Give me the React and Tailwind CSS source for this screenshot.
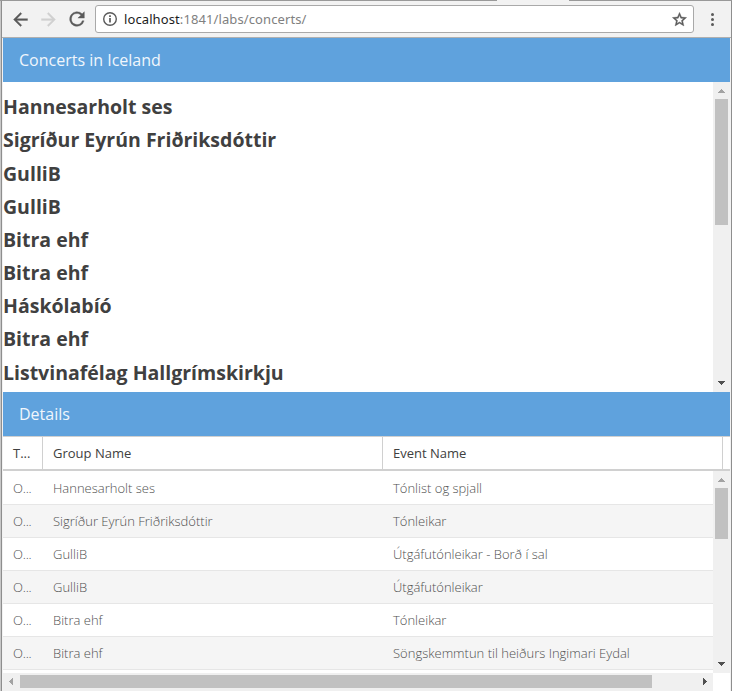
import React from "react";

const concerts = [
  "Hannesarholt ses",
  "Sigríður Eyrún Friðriksdóttir",
  "GulliB",
  "GulliB",
  "Bitra ehf",
  "Bitra ehf",
  "Háskólabíó",
  "Bitra ehf",
  "Listvinafélag Hallgrímskirkju",
];

const rows = [
  ["Hannesarholt ses", "Tónlist og spjall"],
  ["Sigríður Eyrún Friðriksdóttir", "Tónleikar"],
  ["GulliB", "Útgáfutónleikar - Borð í sal"],
  ["GulliB", "Útgáfutónleikar"],
  ["Bitra ehf", "Tónleikar"],
  ["Bitra ehf", "Söngskemmtun til heiðurs Ingimari Eydal"],
];

function Arrow({ className }) {
  return (
    <svg viewBox="0 0 7 4" className={className} shapeRendering="crispEdges" fill="currentColor">
      <path d="M3 0h1v1H3zM2 1h3v1H2zM1 2h5v1H1zM0 3h7v1H0z" />
    </svg>
  );
}

function VerticalScrollbar({ thumb }) {
  return (
    <div className="flex w-[17px] shrink-0 flex-col items-center bg-[#f0f0f0]">
      <div className="h-[17px] pt-[7px]">
        <Arrow className="h-1 w-[7px] text-[#a3a3a3]" />
      </div>
      <div className={"w-[13px] bg-[#c1c1c1] " + thumb} />
      <div className="mt-auto h-[11px]">
        <Arrow className="h-1 w-[7px] rotate-180 text-[#505050]" />
      </div>
    </div>
  );
}

function HorizontalScrollbar() {
  return (
    <div className="flex h-[18px] shrink-0">
      <div className="flex w-[710px] items-start bg-[#f0f0f0] pt-[2px]">
        <div className="flex h-[13px] w-[17px] items-center pl-[6px]">
          <svg viewBox="0 0 4 7" className="h-[7px] w-1 text-[#a3a3a3]" fill="currentColor" shapeRendering="crispEdges">
            <path d="M0 3h1v1H0zM1 2h1v3H1zM2 1h1v5H2zM3 0h1v7H3z" />
          </svg>
        </div>
        <div className="h-[13px] w-[632px] bg-[#c1c1c1]" />
        <div className="ml-auto flex h-[13px] w-[17px] items-center pl-[7px]">
          <svg viewBox="0 0 4 7" className="h-[7px] w-1 text-[#505050]" fill="currentColor" shapeRendering="crispEdges">
            <path d="M3 3h1v1H3zM2 2h1v3H2zM1 1h1v5H1zM0 0h1v7H0z" />
          </svg>
        </div>
      </div>
      <div className="h-[17px] flex-1 bg-white" />
    </div>
  );
}

function Toolbar() {
  return (
    <div className="flex h-[37px] shrink-0 items-center border-b border-[#b0b0b0] bg-[#f2f2f2] pl-[8px] text-[#5a5a5a]">
      <svg viewBox="0 0 24 24" className="h-[21px] w-[21px] shrink-0" fill="currentColor">
        <path d="M20 11H7.83l5.59-5.59L12 4l-8 8 8 8 1.41-1.41L7.83 13H20z" stroke="currentColor" strokeWidth=".4" />
      </svg>
      <svg viewBox="0 0 24 24" className="ml-[7px] h-[21px] w-[21px] shrink-0 text-[#d0d0d0]" fill="currentColor">
        <path d="M12 4l-1.41 1.41L16.17 11H4v2h12.17l-5.58 5.59L12 20l8-8z" stroke="currentColor" strokeWidth=".4" />
      </svg>
      <svg viewBox="0 0 24 24" className="ml-[7px] h-[22px] w-[22px] shrink-0" fill="currentColor">
        <path d="M17.65 6.35A8 8 0 1 0 19.73 14h-2.08A6 6 0 1 1 12 6c1.66 0 3.14.69 4.22 1.78L13 11h7V4z" stroke="currentColor" strokeWidth=".4" />
      </svg>
      <div className="ml-[7px] flex h-7 w-[599px] shrink-0 items-center rounded-[3px] border border-[#a9a9a9] bg-white pl-[6px] pr-[5px]">
        <svg viewBox="0 0 16 16" className="h-4 w-4 shrink-0" fill="none" stroke="currentColor">
          <circle cx="8" cy="8" r="6.3" strokeWidth="1.4" />
          <path d="M8 7v4.5M8 4.3v1.7" strokeWidth="1.7" />
        </svg>
        <span className="ml-[6px] whitespace-pre font-['Noto_Sans',sans-serif] text-[13px] leading-4 tracking-[0.1px] text-[#808080]">
          <span className="text-[#1c1c1c]">localhost</span>:1841/labs/concerts/
        </span>
        <svg viewBox="0 0 24 24" className="ml-auto h-[17px] w-[17px] shrink-0" fill="currentColor">
          <path d="M22 9.24l-7.19-.62L12 2 9.19 8.63 2 9.24l5.46 4.73L5.82 21 12 17.27 18.18 21l-1.63-7.03zM12 15.4l-3.76 2.27 1-4.28-3.32-2.88 4.38-.38L12 6.1l1.71 4.04 4.38.38-3.32 2.88 1 4.28z" stroke="currentColor" strokeWidth=".6" />
        </svg>
      </div>
      <div className="ml-[17px] mt-px flex flex-col gap-[2px]">
        <i className="h-[3px] w-[3px] rounded-full bg-[#5a5a5a]" />
        <i className="h-[3px] w-[3px] rounded-full bg-[#5a5a5a]" />
        <i className="h-[3px] w-[3px] rounded-full bg-[#5a5a5a]" />
      </div>
    </div>
  );
}

function PanelTitle({ children }) {
  return (
    <div className="h-11 shrink-0 bg-[#5fa2dd] pl-4 text-base leading-[44px] text-[#f0f6fc]">{children}</div>
  );
}

export default function App() {
  return (
    <div className="flex h-[691px] w-[732px] flex-col overflow-hidden bg-white font-['Open_Sans',sans-serif]">
      <div className="flex h-px shrink-0 bg-[#999999]">
        <div className="ml-[497px] w-[72px] bg-[#f2f2f2]" />
      </div>
      <div className="flex min-h-0 flex-1">
        <div className="w-px bg-[#c8c8c8]" />
        <div className="w-px bg-[#8e8e8e]" />
        <div className="flex w-[729px] shrink-0 flex-col bg-[#f2f2f2]">
          <Toolbar />
          <div className="ml-px flex min-h-0 w-[727px] flex-1 flex-col bg-white">
            <PanelTitle>Concerts in Iceland</PanelTitle>
            <div className="flex h-[310px] shrink-0">
              <div className="flex-1 overflow-hidden pt-[8.25px]">
                {concerts.map((name, i) => (
                  <h2 key={i} className="h-[33.172px] whitespace-nowrap text-[19.5px] font-bold leading-[33px] text-[#404040]">
                    {name}
                  </h2>
                ))}
              </div>
              <VerticalScrollbar thumb="h-[126px]" />
            </div>
            <PanelTitle>Details</PanelTitle>
            <div className="flex h-[35px] shrink-0 border-b-2 border-t border-[#d0d0d0] text-[13px] leading-[32px] text-[#404040]">
              <div className="w-10 border-r border-[#d0d0d0] pl-[10px]">T...</div>
              <div className="w-[340px] border-r border-[#d0d0d0] pl-[10px]">Group Name</div>
              <div className="w-[340px] border-r border-[#d0d0d0] pl-[10px]">Event Name</div>
            </div>
            <div className="flex h-[202px] shrink-0">
              <div className="flex-1 overflow-hidden pt-px text-[13px] font-light leading-[32px] text-[#505050]">
                {rows.map(([group, event], i) => (
                  <div key={i} className="flex h-[33px] whitespace-nowrap border-b border-[#e6e6e6] even:bg-[#f5f5f5]">
                    <div className="w-10 pl-[10px] tracking-[-0.2px]">O...</div>
                    <div className="w-[340px] pl-[10px]">{group}</div>
                    <div className="pl-[10px]">{event}</div>
                  </div>
                ))}
              </div>
              <VerticalScrollbar thumb="h-[51px]" />
            </div>
            <HorizontalScrollbar />
          </div>
        </div>
        <div className="w-px bg-[#8e8e8e]" />
      </div>
    </div>
  );
}
